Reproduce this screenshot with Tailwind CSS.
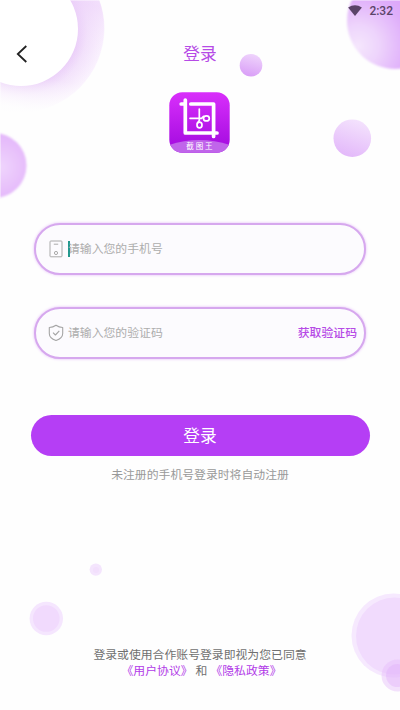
<!DOCTYPE html>
<html lang="zh-CN">
<head>
<meta charset="utf-8">
<meta name="viewport" content="width=device-width, initial-scale=1">
<title>登录</title>
<script src="https://cdn.jsdelivr.net/npm/@tailwindcss/browser@4"></script>
</head>
<body class="bg-white">
<div class="relative flex h-[710px] w-[400px] flex-col overflow-hidden bg-[#fefefe] font-['Noto_Sans_CJK_SC',sans-serif] text-[11.85px] leading-4">
  <!-- Decorative bubbles -->
  <svg class="absolute inset-0" width="400" height="710" viewBox="0 0 400 710" aria-hidden="true">
    <defs>
      <radialGradient id="halo" gradientUnits="userSpaceOnUse" cx="21" cy="29" r="83">
        <stop offset=".68" stop-color="#e9cbf8"/><stop offset=".8" stop-color="#f2e0fb"/><stop offset="1" stop-color="#faf2fe"/>
      </radialGradient>
      <linearGradient id="haloTop" gradientUnits="userSpaceOnUse" x1="60" y1="0" x2="40" y2="112">
        <stop offset="0" stop-color="#edd2fa" stop-opacity=".6"/><stop offset=".4" stop-color="#f6e8fc" stop-opacity=".1"/><stop offset=".7" stop-color="#fefefe" stop-opacity=".15"/><stop offset="1" stop-color="#fefefe" stop-opacity=".95"/>
      </linearGradient>
      <radialGradient id="left" gradientUnits="userSpaceOnUse" cx="0" cy="167" r="34">
        <stop offset="0" stop-color="#efd5fd"/><stop offset=".7" stop-color="#e7bffb"/><stop offset="1" stop-color="#e3b6fa"/>
      </radialGradient>
      <radialGradient id="corner" gradientUnits="userSpaceOnUse" cx="358" cy="46" r="58">
        <stop offset="0" stop-color="#f5e6fd"/><stop offset=".35" stop-color="#eed5fc"/><stop offset=".85" stop-color="#dfaefa"/><stop offset="1" stop-color="#dda8f9"/>
      </radialGradient>
      <linearGradient id="small" x1=".65" y1="0" x2=".4" y2="1"><stop offset="0" stop-color="#efd4fc"/><stop offset="1" stop-color="#d99ef7"/></linearGradient>
      <linearGradient id="mid" x1=".7" y1="0" x2=".35" y2="1"><stop offset="0" stop-color="#f4e3fd"/><stop offset="1" stop-color="#e3b8fa"/></linearGradient>
      <filter id="soft" x="-10%" y="-10%" width="120%" height="120%"><feGaussianBlur stdDeviation=".8"/></filter>
    </defs>
    <circle cx="21" cy="29" r="83" fill="url(#halo)"/>
    <circle cx="21" cy="29" r="83.500" fill="url(#haloTop)"/>
    <circle cx="21" cy="29" r="57" fill="#fff"/>
    <g filter="url(#soft)">
      <circle cx="-6" cy="165.500" r="32.500" fill="url(#left)"/>
      <circle cx="395" cy="21" r="48" fill="url(#corner)"/>
    </g>
    <circle cx="251" cy="65.300" r="11.300" fill="url(#small)"/>
    <circle cx="352.300" cy="138.200" r="18.800" fill="url(#mid)"/>
    <circle cx="95.800" cy="569.600" r="6.200" fill="#f4e5fd"/>
    <circle cx="96" cy="570" r="3" fill="#f2dffc"/>
    <circle cx="46.300" cy="618.500" r="16.700" fill="#f5e6fe"/>
    <circle cx="46.300" cy="618.500" r="13.300" fill="#f1dafd"/>
    <circle cx="393.500" cy="635.500" r="42" fill="#f6e9fe"/>
    <circle cx="394.500" cy="636" r="38.500" fill="#f1dbfd"/>
    <circle cx="397.500" cy="675.500" r="16" fill="#e4bbfb" fill-opacity=".42"/>
    <circle cx="397.500" cy="675.500" r="11.500" fill="#e0b0fa" fill-opacity=".4"/>
    <path d="M0 .5H400M.5 0V198" stroke="#fff" stroke-opacity=".4" fill="none"/>
  </svg>

  <!-- Status bar -->
  <div class="relative flex h-[22px] items-center justify-end gap-[7px] pr-[7px] font-[Roboto,sans-serif] text-xs font-medium text-[#5b4468]">
    <svg class="-mt-0.5" width="14" height="11" viewBox="0 0 14 11"><path d="M.1 2.500Q7-2.200 13.900 2.500L7 10.900Z" fill="#5b4468"/></svg>
    <span>2:32</span>
  </div>

  <!-- Title bar -->
  <header class="relative grid h-[64px] grid-cols-[60px_1fr_60px] items-center">
    <svg class="ml-4" width="12" height="18" viewBox="0 0 12 18" fill="none" stroke="#222" stroke-width="1.800"><path d="M10.300 1L1.800 9L10.300 17"/></svg>
    <h1 class="pb-0.5 text-center text-[16.700px] text-[#b64be6]">登录</h1>
  </header>

  <main class="relative flex flex-col items-center pt-[6px]">
    <svg class="mr-px shrink-0" width="61" height="61" viewBox="0 0 61 61">
      <defs>
        <linearGradient id="logo" x1="0" y1="0" x2="0" y2="1"><stop offset="0" stop-color="#d92ffb"/><stop offset="1" stop-color="#a009de"/></linearGradient>
        <clipPath id="tile"><rect x=".3" y=".3" width="60.400" height="60.400" rx="13"/></clipPath>
      </defs>
      <g clip-path="url(#tile)">
        <rect width="61" height="61" fill="url(#logo)"/>
        <path d="M0 53Q30 43 61 53V61H0Z" fill="#c065ea"/>
      </g>
      <g fill="none" stroke="#fff" stroke-width="3.700" stroke-linecap="round" stroke-linejoin="round">
        <path d="M12.200 12H16.300M16.300 8V41H48M21.800 12H44.600V44.500"/>
      </g>
      <g fill="none" stroke="#fff" stroke-width="1.700" stroke-linecap="round">
        <path d="M30.300 17V28.500L28.500 31M21 26.300H32.500L34.500 24.500"/>
        <ellipse cx="37.400" cy="26.400" rx="2.900" ry="2.500"/><ellipse cx="30.500" cy="33" rx="2.500" ry="2.900"/>
      </g>
      <text x="31.300" y="57" text-anchor="middle" font-family="Noto Sans CJK SC" font-size="7.500" letter-spacing="1.800" fill="#fff">截图王</text>
    </svg>

    <form class="flex w-full flex-col items-center pt-[70px]">
      <label class="flex h-[52px] w-[332px] items-center rounded-full border-2 border-[#d6a8ee] bg-[#fcfbfe] px-[12px] shadow-[0_0_3px_#e3b8f8]">
        <svg class="ml-[1px]" width="14" height="18" viewBox="0 0 14 18" fill="none" stroke="#aaa"><rect x="1" y="1" width="12" height="15.800" rx=".8"/><path d="M4.800 4.200H9.200"/><circle cx="7" cy="13" r="1.600"/></svg>
        <span class="ml-[5px] h-4 w-0.5 bg-[#23988c]"></span>
        <span class="-ml-[2px] pb-0.5 text-[#adadad]">请输入您的手机号</span>
      </label>
      <label class="mt-8 flex h-[52px] w-[332px] items-center rounded-full border-2 border-[#d6a8ee] bg-[#fcfbfe] pr-[7px] pl-[12px] shadow-[0_0_3px_#e3b8f8]">
        <svg width="16" height="18" viewBox="0 0 16 18" fill="none" stroke="#a5a5a5" stroke-width="1.100" stroke-linejoin="round"><path d="M8 1.300Q11 3.400 14.700 3.500V9.500C14.700 13 11.500 15.300 8 16.500C4.500 15.300 1.300 13 1.300 9.500V3.500Q5 3.400 8 1.300Z"/><path d="M5 8.600L7.400 11L11.300 6.900"/></svg>
        <span class="ml-1 pb-0.5 text-[#adadad]">请输入您的验证码</span>
        <span class="ml-auto pb-0.5 font-medium text-[#b64be6]">获取验证码</span>
      </label>
      <button type="button" class="mt-[56px] h-[41px] w-[339px] rounded-full bg-[#b53ef5] pb-0.5 text-[16.700px] text-white">登录</button>
    </form>
    <p class="mt-[10px] text-[#999]">未注册的手机号登录时将自动注册</p>
  </main>

  <footer class="relative mt-auto flex flex-col items-center pb-8 text-[#707070]">
    <p>登录或使用合作账号登录即视为您已同意</p>
    <p class="flex gap-[3px] pl-[3px]"><a class="text-[#b23be8]">《用户协议》</a><span>和</span><a class="text-[#b23be8]">《隐私政策》</a></p>
  </footer>
</div>
</body>
</html>
